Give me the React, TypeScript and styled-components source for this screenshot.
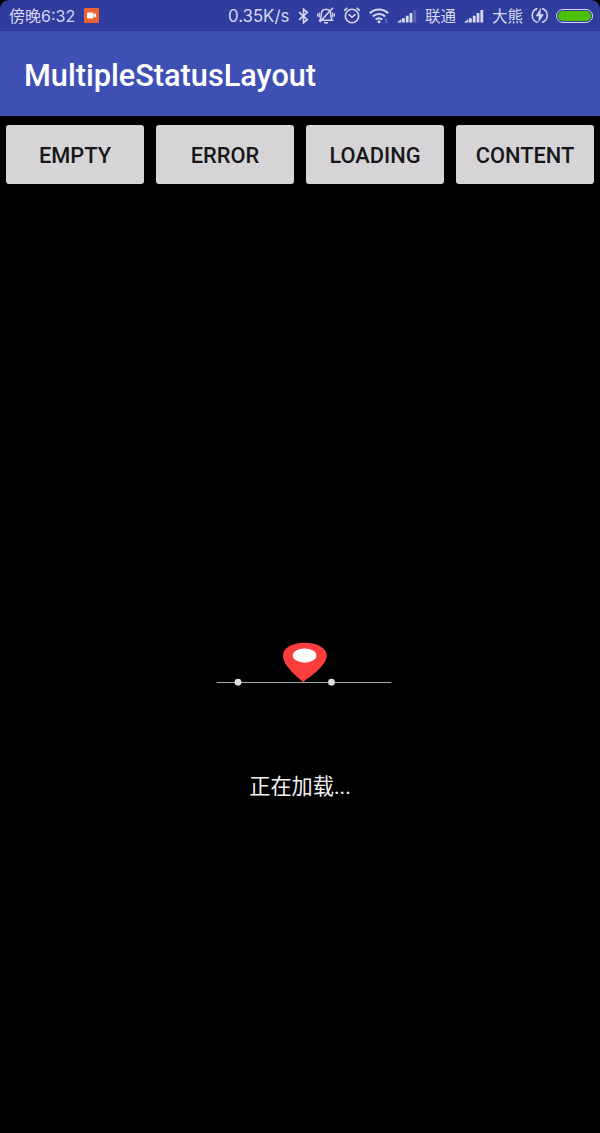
import React from 'react';
import styled, { createGlobalStyle } from 'styled-components';

const GlobalStyle = createGlobalStyle`
  * { box-sizing: border-box; }
  body { margin: 0; background: #000; }
`;

const Screen = styled.div`
  display: flex;
  flex-direction: column;
  height: 1133px;
  width: 600px;
  overflow: hidden;
  background: #000;
  font-family: Roboto, "Noto Sans CJK SC", sans-serif;
`;

const StatusBar = styled.header`
  display: flex;
  align-items: center;
  flex: none;
  height: 31px;
  padding: 0 7px 0 9px;
  background: #303d9e;
  border-radius: 9px 9px 0 0;
  color: #d6d8f0;

  svg { display: block; flex: none; }
`;

const StatusText = styled.span<{ $width: number; $size?: number; $drop?: number }>`
  flex: none;
  width: ${(p) => p.$width}px;
  padding-top: ${(p) => p.$drop ?? 1}px;
  font-family: Inter, "Noto Sans CJK SC", sans-serif;
  font-size: ${(p) => p.$size ?? 16}px;
  line-height: 30px;
  white-space: nowrap;
`;

const Clock = styled.div`
  display: flex;
  align-items: center;
  gap: 9px;
`;

const Indicators = styled.div`
  display: flex;
  align-items: center;
  gap: 8px;
  margin-left: auto;
`;

const Battery = styled.div`
  width: 37px;
  height: 14px;
  padding: 1px;
  border: 1px solid #d6d8f0;
  border-radius: 7px;

  &::before {
    content: '';
    display: block;
    height: 10px;
    border-radius: 5px;
    background: #4dc10a;
  }
`;

const AppBar = styled.div`
  display: flex;
  align-items: center;
  flex: none;
  height: 85px;
  padding: 4px 24px 0;
  background: #3f50b5;
`;

const Title = styled.h1`
  margin: 0;
  color: #fff;
  font-size: 30.7px;
  font-weight: 500;
  line-height: 40px;
`;

const ButtonRow = styled.nav`
  display: grid;
  grid-template-columns: repeat(4, 1fr);
  gap: 12px;
  flex: none;
  padding: 9px 6px;
`;

const StateButton = styled.button`
  height: 59px;
  padding: 2px 0 0;
  border: 0;
  border-radius: 3px;
  background: #d6d4d7;
  color: #17171a;
  font: 500 21.8px Roboto, sans-serif;
`;

const Loading = styled.main`
  display: flex;
  flex-direction: column;
  align-items: center;
  flex: 1;
  padding-top: 448px;

  svg { display: block; margin-left: 8px; }
`;

const LoadingText = styled.p`
  margin: 85px 0 0;
  color: #f2f2f2;
  font-size: 21.2px;
  line-height: 30px;
`;

const CameraIcon = () => (
  <svg width="15" height="15" viewBox="0 0 15 15">
    <rect width="15" height="15" rx="1" fill="#ee6130" />
    <rect x="3" y="4.5" width="6.5" height="6" rx="1" fill="#fff" />
    <path d="M9 7.5 12 5v5z" fill="#fff" />
  </svg>
);

const BluetoothIcon = () => (
  <svg width="11" height="16" viewBox="0 0 11 16" fill="none" stroke="currentColor" strokeWidth="1.6">
    <path d="M1 4.2 9.3 11.6 5.5 14.7V1.3L9.3 4.4 1 11.8" />
  </svg>
);

const MuteIcon = () => (
  <svg width="18" height="18" viewBox="0 0 18 18" fill="none" stroke="currentColor" strokeWidth="1.5">
    <path d="M2.800 13.200h12.400c-1.100-1.300-1.400-2.700-1.400-5.400C13.800 4.500 12 2.200 9 2.200S4.200 4.500 4.200 7.800c0 2.700-.3 4.100-1.400 5.400Z" />
    <path d="M7 15.700h4M16 .8 2.800 15" />
    <path d="M2.300 5.500v5M.6 6.600v2.800M15.700 5.500v5M17.400 6.600v2.800" strokeWidth="1.200" />
  </svg>
);

const AlarmIcon = () => (
  <svg width="18" height="18" viewBox="0 0 18 18" fill="none" stroke="currentColor" strokeWidth="1.6">
    <circle cx="9" cy="9" r="6.700" />
    <path d="m5.600 7.300 3.400 3 3.400-3M1.200 3.600 4.300.8M16.800 3.600 13.700.8" />
  </svg>
);

const WifiIcon = () => (
  <svg width="20" height="16" viewBox="0 0 20 16" fill="none" stroke="currentColor" strokeWidth="2.1">
    <path d="M.8 5.200c5.300-4.900 13.100-4.900 18.400 0M3.800 8.500c3.600-3.300 8.800-3.300 12.400 0M6.700 11.600c1.900-1.800 4.700-1.800 6.600 0" />
    <circle cx="10" cy="13.800" r="1.500" fill="currentColor" stroke="none" />
    <path d="M17.200 10.500v4.500" strokeWidth="1.8" opacity=".35" />
  </svg>
);

const SignalIcon = ({ full }: { full?: boolean }) => (
  <svg width="20" height="14" viewBox="0 0 20 14" fill="currentColor">
    <path d="M0 13.500 4.300 10v3.500zM5 9.300h2.800v4.200H5zM8.800 6.800h2.800v6.700H8.800zM12.600 4h2.800v9.500h-2.800z" />
    <path d="M16.400 1h2.800v12.500h-2.800z" opacity={full ? 1 : 0.25} />
  </svg>
);

const ChargingIcon = () => (
  <svg width="17" height="17" viewBox="0 0 17 17">
    <path
      d="M6.500 1.500a7.300 7.300 0 0 0 0 14M11 1.500a7.300 7.300 0 0 1 0 14"
      fill="none"
      stroke="currentColor"
      strokeWidth="1.500"
    />
    <path d="M10 .8 4.700 9.200h3.200l-.6 6.800L12.800 7.300H9.400z" fill="currentColor" />
  </svg>
);

const LocationTrack = () => (
  <svg width="176" height="46" viewBox="0 0 176 46">
    <path d="M.5 41.500h175" stroke="#a9a9a9" strokeWidth="1" />
    <circle cx="22" cy="41.200" r="3.400" fill="#dedede" />
    <circle cx="115.500" cy="41.200" r="3.400" fill="#dedede" />
    <path
      d="M87.300 41C79.500 34.500 67 24.500 67 14.500 67 7 76 1.800 88.700 1.800s22 5.200 22 12.700c0 10-15 19.800-23.400 26.500Z"
      fill="#fb3d3d"
    />
    <ellipse cx="88.600" cy="14.600" rx="11.800" ry="7.100" fill="#fff" />
  </svg>
);

const states = ['EMPTY', 'ERROR', 'LOADING', 'CONTENT'];

export default function App() {
  return (
    <Screen>
      <GlobalStyle />
      <StatusBar>
        <Clock>
          <StatusText $width={66}>傍晚6:32</StatusText>
          <CameraIcon />
        </Clock>
        <Indicators>
          <StatusText $width={62} $size={16.8}>0.35K/s</StatusText>
          <BluetoothIcon />
          <MuteIcon />
          <AlarmIcon />
          <WifiIcon />
          <SignalIcon />
          <StatusText $width={31} $size={15.5} $drop={3}>联通</StatusText>
          <SignalIcon full />
          <StatusText $width={31} $size={15.5} $drop={3}>大熊</StatusText>
          <ChargingIcon />
          <Battery />
        </Indicators>
      </StatusBar>
      <AppBar>
        <Title>MultipleStatusLayout</Title>
      </AppBar>
      <ButtonRow>
        {states.map((s) => (
          <StateButton key={s}>{s}</StateButton>
        ))}
      </ButtonRow>
      <Loading>
        <LocationTrack />
        <LoadingText>正在加载...</LoadingText>
      </Loading>
    </Screen>
  );
}
